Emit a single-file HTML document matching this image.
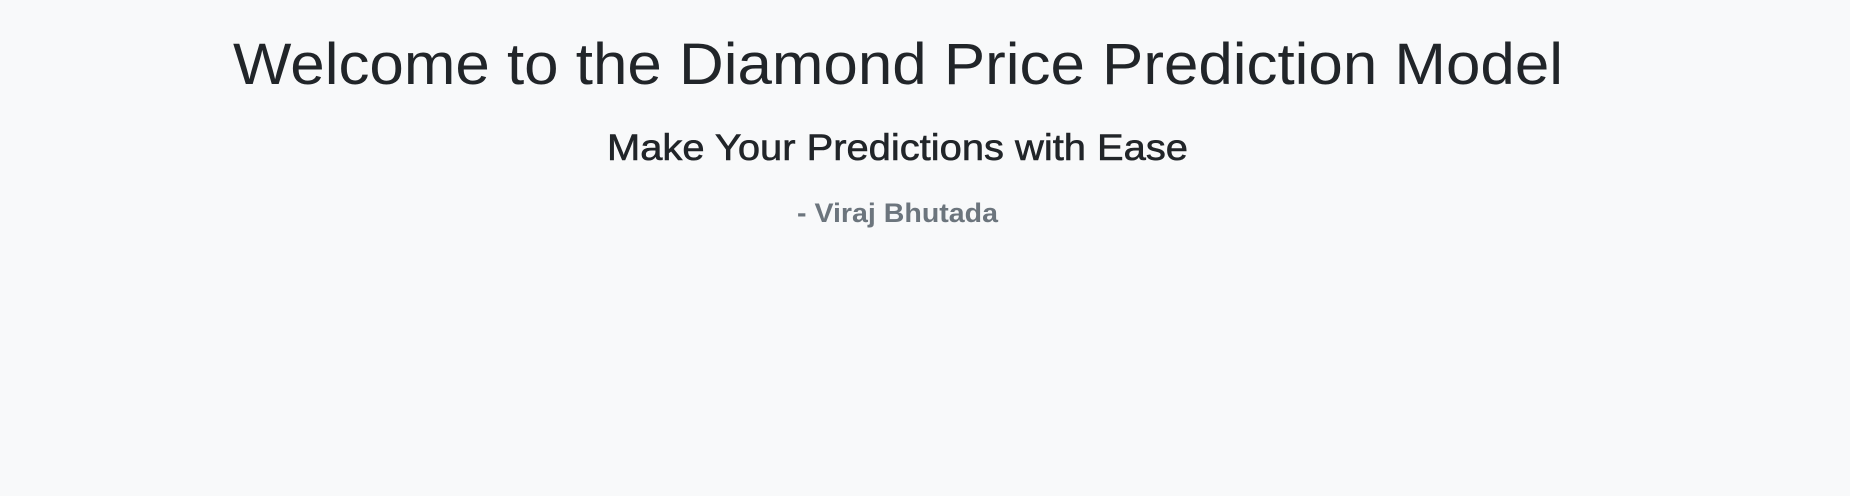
<!DOCTYPE html>
<html><head><meta charset="utf-8"><style>
html,body{margin:0;padding:0;background:#f8f9fa;width:1850px;height:496px;overflow:hidden}
svg{display:block}
</style></head><body>
<svg width="1850" height="496" xmlns="http://www.w3.org/2000/svg">
<rect width="1850" height="496" fill="#f8f9fa"/>
<text x="233" y="84" font-family="Liberation Sans, sans-serif" font-size="58" fill="#212529" textLength="1330" lengthAdjust="spacingAndGlyphs">Welcome to the Diamond Price Prediction Model</text>
<text x="607" y="160" font-family="Liberation Sans, sans-serif" font-size="37" fill="#212529" stroke="#212529" stroke-width="0.6" textLength="581" lengthAdjust="spacingAndGlyphs">Make Your Predictions with Ease</text>
<text x="797" y="222" font-family="Liberation Sans, sans-serif" font-size="27" font-weight="bold" fill="#6c757d" textLength="201" lengthAdjust="spacingAndGlyphs">- Viraj Bhutada</text>
</svg>
</body></html>
